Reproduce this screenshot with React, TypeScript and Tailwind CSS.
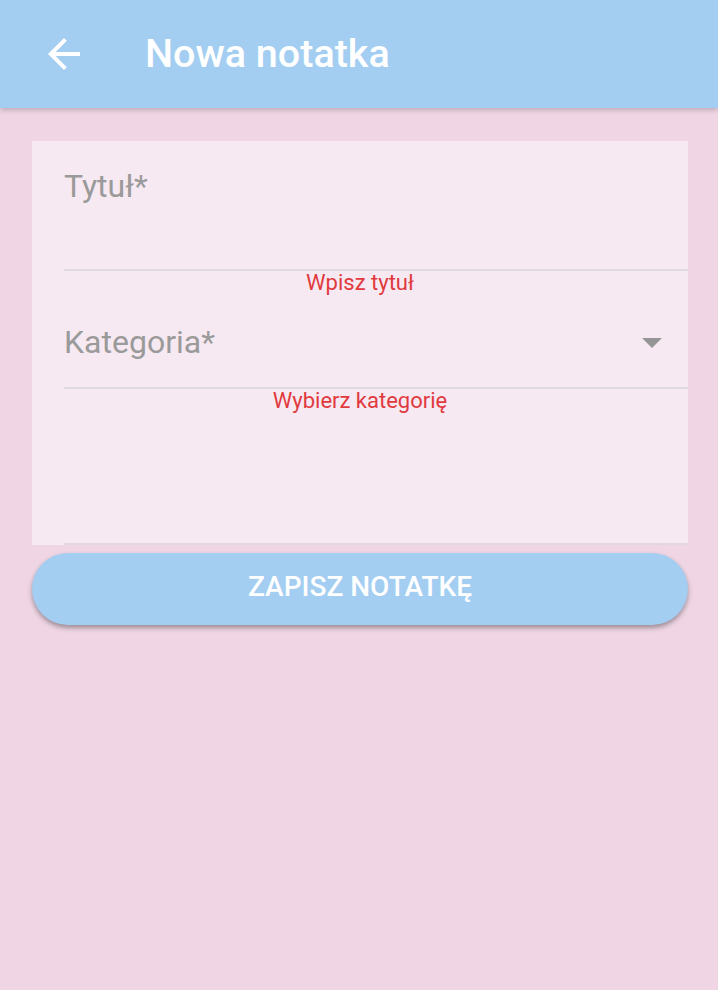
import React from "react";

export default function App() {
  return (
    <div
      className="w-[718px] h-[990px] bg-[#F0D6E5] flex flex-col"
      style={{ fontFamily: "Roboto, 'Noto Sans', sans-serif" }}
    >
      <header className="h-[108px] bg-[#A3CEF1] flex items-center shadow-[0_2px_5px_rgba(0,0,0,0.22)] relative z-10">
        <div className="w-[145px] flex items-center pl-[40px]">
          <svg width="48" height="48" viewBox="0 0 24 24" fill="white">
            <path d="M20 11H7.83l5.59-5.59L12 4l-8 8 8 8 1.41-1.41L7.83 13H20v-2z" />
          </svg>
        </div>
        <h1 className="text-white text-[39.5px] font-medium leading-none pb-[1px]">Nowa notatka</h1>
      </header>

      <main className="pl-[32px] pr-[30px] pt-[33px] flex flex-col">
        <div className="bg-[#F7E9F2] h-[404px] flex flex-col">
          <div className="pl-[32px] flex flex-col">
            <div className="h-[128px] pt-[26px]">
              <span className="block text-[32px] leading-[38px] text-[#9A9A9A]">Tytuł*</span>
            </div>
            <div className="h-[2px] bg-[#DCDCDC]" />
          </div>
          <div className="text-center text-[22px] leading-[24px] text-[#E03A3E]">
            Wpisz tytuł
          </div>
          <div className="pl-[32px] pt-[28px] flex flex-col">
            <div className="h-[64px] flex items-start justify-between pr-[26px]">
              <span className="block text-[32px] leading-[38px] text-[#9A9A9A]">Kategoria*</span>
              <svg width="20" height="10" viewBox="0 0 20 10" className="mt-[15px]">
                <path d="M0 0h20L10 10z" fill="#959595" />
              </svg>
            </div>
            <div className="h-[2px] bg-[#DCDCDC]" />
          </div>
          <div className="text-center text-[22px] leading-[24px] text-[#E03A3E]">
            Wybierz kategorię
          </div>
          <div className="flex-1" />
          <div className="pl-[32px] h-[2px]">
            <div className="h-[2px] bg-[#E4D6DC]" />
          </div>
        </div>

        <button className="mt-[8px] h-[72px] pb-[4px] rounded-full bg-[#A3CEF1] text-white text-[28px] font-medium shadow-[0_3px_5px_rgba(0,0,0,0.35)]">
          ZAPISZ NOTATKĘ
        </button>
      </main>
    </div>
  );
}
